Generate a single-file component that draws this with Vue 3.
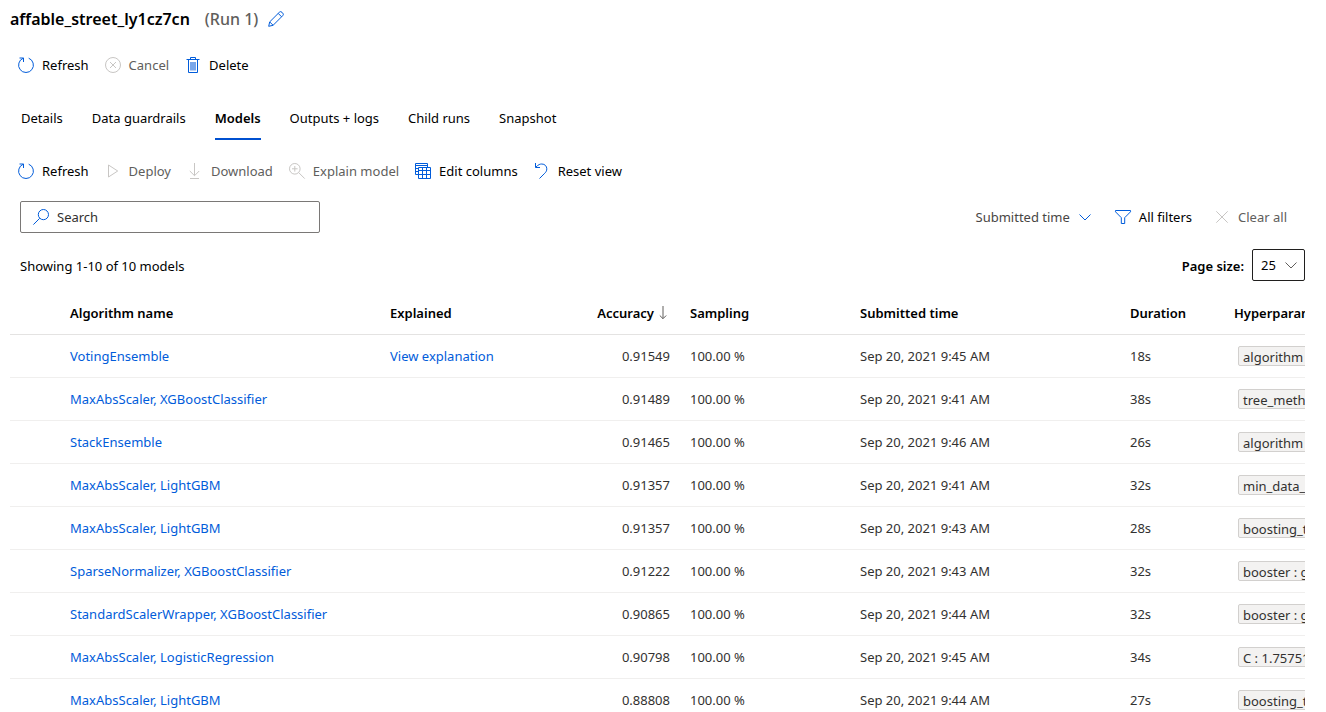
<script setup>
import { ref } from 'vue'

const tabs = ['Details', 'Data guardrails', 'Models', 'Outputs + logs', 'Child runs', 'Snapshot']
const activeTab = ref('Models')
const search = ref('')
const pageSize = ref('25')

const models = [
  { name: 'VotingEnsemble', explained: true, accuracy: '0.91549', time: 'Sep 20, 2021 9:45 AM', duration: '18s', param: 'algorithm : [ LightGBM ]' },
  { name: 'MaxAbsScaler, XGBoostClassifier', accuracy: '0.91489', time: 'Sep 20, 2021 9:41 AM', duration: '38s', param: 'tree_method : auto' },
  { name: 'StackEnsemble', accuracy: '0.91465', time: 'Sep 20, 2021 9:46 AM', duration: '26s', param: 'algorithm : [ LightGBM ]' },
  { name: 'MaxAbsScaler, LightGBM', accuracy: '0.91357', time: 'Sep 20, 2021 9:41 AM', duration: '32s', param: 'min_data_in_leaf : 20' },
  { name: 'MaxAbsScaler, LightGBM', accuracy: '0.91357', time: 'Sep 20, 2021 9:43 AM', duration: '28s', param: 'boosting_type : gbdt' },
  { name: 'SparseNormalizer, XGBoostClassifier', accuracy: '0.91222', time: 'Sep 20, 2021 9:43 AM', duration: '32s', param: 'booster : gbtree' },
  { name: 'StandardScalerWrapper, XGBoostClassifier', accuracy: '0.90865', time: 'Sep 20, 2021 9:44 AM', duration: '32s', param: 'booster : gbtree' },
  { name: 'MaxAbsScaler, LogisticRegression', accuracy: '0.90798', time: 'Sep 20, 2021 9:45 AM', duration: '34s', param: 'C : 1.757510624' },
  { name: 'MaxAbsScaler, LightGBM', accuracy: '0.88808', time: 'Sep 20, 2021 9:44 AM', duration: '27s', param: 'boosting_type : gbdt' }
]
</script>

<template>
  <main class="page">
    <header class="title">
      <h1>affable_street_ly1cz7cn</h1>
      <span class="run">(Run 1)</span>
      <button class="plain" aria-label="Edit name">
        <svg class="icon blue" viewBox="0 0 16 16"><path d="M.7 15.3l1-4.4L11.3 1.300a1.900 1.900 0 0 1 2.700 0l.7.700a1.900 1.900 0 0 1 0 2.700L5.100 14.300zM10.200 2.400l3.400 3.400M1.700 10.900l3.400 3.400" /></svg>
      </button>
    </header>

    <div class="bar">
      <button class="command">
        <svg class="icon blue" viewBox="0 0 16 16"><path d="M1.500 1h4v4M5.300 1.200A7.400 7.400 0 1 0 10.700 1.200" /></svg>Refresh
      </button>
      <button class="command" disabled>
        <svg class="icon" viewBox="0 0 16 16"><path d="M8 .5a7.500 7.500 0 1 0 0 15a7.500 7.500 0 1 0 0-15M5 5l6 6M11 5l-6 6" /></svg>Cancel
      </button>
      <button class="command">
        <svg class="icon blue" viewBox="0 0 16 16"><path d="M1.500 2.500h13M5.500 2.500v-2h5v2M3.500 2.500v13h9v-13" /><path class="tint" d="M5 5h6v8.500h-6z" /></svg>Delete
      </button>
    </div>

    <nav class="tabs" role="tablist">
      <button
        v-for="tab in tabs"
        :key="tab"
        role="tab"
        class="tab"
        :class="{ active: tab === activeTab }"
        :aria-selected="tab === activeTab"
        @click="activeTab = tab"
      >{{ tab }}</button>
    </nav>

    <div class="bar">
      <button class="command">
        <svg class="icon blue" viewBox="0 0 16 16"><path d="M1.500 1h4v4M5.300 1.200A7.400 7.400 0 1 0 10.700 1.200" /></svg>Refresh
      </button>
      <button class="command" disabled>
        <svg class="icon" viewBox="0 0 16 16"><path d="M3.500 2v12l9.200-6z" /></svg>Deploy
      </button>
      <button class="command" disabled>
        <svg class="icon" viewBox="0 0 16 16"><path d="M7.500 0v12.500M2.800 8l4.700 4.700L12.200 8M3 15.500h9" /></svg>Download
      </button>
      <button class="command" disabled>
        <svg class="icon" viewBox="0 0 16 16"><path d="M5.800 .5a5.300 5.300 0 1 0 0 10.600a5.300 5.300 0 1 0 0-10.600M9.700 9.600l6 6M3 5.800h5.600M5.800 3v5.600" /></svg>Explain model
      </button>
      <button class="command">
        <svg class="icon blue" viewBox="0 0 16 16"><path d="M3.500 15.500v-11h12v11zM3.500 7.500h12M3.500 11.500h12M7.500 4.500v11M11.500 4.500v11M12.500 4.500v-4h-12v11h3M.5 2.500h12M.5 5.500h3M.5 8.500h3" /></svg>Edit columns
      </button>
      <button class="command">
        <svg class="icon blue" viewBox="0 0 16 16"><path d="M1.500 0v4.500H6M1.800 4.200C4.500 1.500 6 1 7.800 1c3 0 5 2.200 5 4.800c0 2-.8 3.200-2 4.400L5.500 15.500" /></svg>Reset view
      </button>
    </div>

    <section class="filters">
      <label class="search">
        <svg class="icon blue" viewBox="0 0 16 16"><path d="M10.400 .5a5.100 5.100 0 1 0 0 10.200a5.100 5.100 0 1 0 0-10.200M6.700 9.300L.4 15.600" /></svg>
        <input v-model="search" type="text" placeholder="Search" aria-label="Search" />
      </label>
      <div class="filter-actions">
        <button class="plain sort">
          Submitted time
          <svg class="chevron blue" viewBox="0 0 12 12"><path d="M.5 3.500l5.500 5.500l5.500-5.500" /></svg>
        </button>
        <button class="plain all">
          <svg class="icon blue" viewBox="0 0 16 16"><path d="M.5 1.500h15v1.300L9.700 8.700v5.800h-3.400V8.700L.5 2.800z" /></svg>All filters
        </button>
        <button class="plain clear" disabled>
          <svg class="chevron" viewBox="0 0 12 12"><path d="M.3 .3l11.400 11.400M11.700 .3L.3 11.700" /></svg>Clear all
        </button>
      </div>
    </section>

    <section class="summary">
      <span class="caption">Showing 1-10 of 10 models</span>
      <div class="page-size">
        <label class="caption" for="page-size">Page size:</label>
        <span class="select">
          <select id="page-size" v-model="pageSize">
            <option>25</option>
            <option>50</option>
          </select>
          <svg class="chevron" viewBox="0 0 12 12"><path d="M.5 3.500l5.500 5.500l5.500-5.500" /></svg>
        </span>
      </div>
    </section>

    <div class="grid">
      <table>
        <colgroup>
          <col class="c-select" /><col class="c-name" /><col class="c-explained" /><col class="c-accuracy" />
          <col class="c-sampling" /><col class="c-time" /><col class="c-duration" /><col class="c-params" />
        </colgroup>
        <thead>
          <tr>
            <td></td>
            <th scope="col">Algorithm name</th>
            <th scope="col">Explained</th>
            <th scope="col" class="number">
              <span class="sorted">Accuracy
                <svg class="arrow" viewBox="0 0 8 14"><path d="M4 0v12.500M.8 9.500l3.200 3.200l3.200-3.200" /></svg>
              </span>
            </th>
            <th scope="col">Sampling</th>
            <th scope="col">Submitted time</th>
            <th scope="col">Duration</th>
            <th scope="col">Hyperparameters</th>
          </tr>
        </thead>
        <tbody>
          <tr v-for="(model, i) in models" :key="i">
            <td></td>
            <td><a href="#">{{ model.name }}</a></td>
            <td><a v-if="model.explained" href="#">View explanation</a></td>
            <td class="number">{{ model.accuracy }}</td>
            <td>100.00 %</td>
            <td>{{ model.time }}</td>
            <td>{{ model.duration }}</td>
            <td><span class="tag">{{ model.param }}</span></td>
          </tr>
        </tbody>
      </table>
    </div>
  </main>
</template>

<style>
body {
  margin: 0;
  background: #fff;
}
</style>

<style scoped>
.page {
  box-sizing: border-box;
  height: 100vh;
  overflow: hidden;
  padding: 6px 21px 0 10px;
  color: #000;
  font-family: "Noto Sans", "Open Sans", sans-serif;
  font-size: 13px;
  line-height: 20px;
}
button,
input,
select {
  margin: 0;
  padding: 0;
  border: 0;
  background: none;
  color: inherit;
  font: inherit;
}
svg {
  flex: none;
  fill: none;
  stroke: #c8c6c4;
  overflow: visible;
}
.icon {
  width: 16px;
  height: 16px;
}
.chevron {
  width: 12px;
  height: 12px;
}
svg.blue {
  stroke: #015cda;
}
.tint {
  fill: #7aa7ea;
  stroke: none;
}
.title {
  display: flex;
  align-items: center;
  height: 26px;
  font-size: 16px;
}
h1 {
  margin: 0 15px 0 0;
  font-size: 16px;
  font-weight: 600;
}
.run {
  margin-right: 10px;
  color: #605e5c;
  font-weight: 500;
}
.plain {
  display: flex;
  align-items: center;
}
.bar {
  display: flex;
  align-items: center;
  gap: 16px;
  padding-left: 8px;
  height: 32px;
}
.title + .bar {
  margin-top: 17px;
}
.command {
  display: flex;
  align-items: center;
  gap: 8px;
}
button:disabled {
  color: #605e5c;
}
.tabs {
  display: flex;
  gap: 29px;
  margin: 15px 0 15px 11px;
}
.tab {
  height: 44px;
  padding-top: 2px;
  border-bottom: 2px solid transparent;
}
.tab.active {
  border-bottom-color: #0050d0;
  font-weight: 600;
}
.filters {
  display: flex;
  justify-content: space-between;
  align-items: center;
  margin: 14px 0 0 10px;
}
.search {
  display: flex;
  align-items: center;
  gap: 8px;
  box-sizing: border-box;
  width: 300px;
  height: 32px;
  padding: 0 12px;
  border: 1px solid #7a7876;
  border-radius: 2px;
}
.search input {
  flex: 1;
  min-width: 0;
  outline: 0;
}
.search input::placeholder {
  color: #323130;
  opacity: 1;
}
.filter-actions {
  display: flex;
  align-items: center;
  gap: 24px;
  padding-right: 18px;
}
.sort {
  gap: 9px;
  color: #484644;
}
.all {
  gap: 8px;
}
.clear {
  gap: 10px;
}
.summary {
  display: flex;
  justify-content: space-between;
  align-items: center;
  margin: 16px 0 0 10px;
}
.caption {
  padding-top: 2px;
}
.page-size {
  display: flex;
  align-items: center;
  gap: 8px;
  font-weight: 600;
}
.select {
  display: grid;
  align-items: center;
  width: 53px;
  height: 32px;
  box-sizing: border-box;
  border: 1px solid #201f1e;
  border-radius: 2px;
  font-weight: 400;
}
.select select,
.select svg {
  grid-area: 1 / 1;
}
.select select {
  appearance: none;
  width: 100%;
  height: 30px;
  padding-left: 8px;
}
.select svg {
  justify-self: end;
  margin-right: 7px;
  stroke: #605e5c;
  pointer-events: none;
}
.grid {
  margin-top: 11px;
  overflow: hidden;
}
table {
  width: 100%;
  min-width: 1500px;
  table-layout: fixed;
  border-collapse: separate;
  border-spacing: 0;
  color: #323130;
}
.c-select { width: 50px; }
.c-name { width: 320px; }
.c-explained { width: 180px; }
.c-accuracy { width: 120px; }
.c-sampling { width: 170px; }
.c-time { width: 270px; }
.c-duration { width: 104px; }
th,
td {
  box-sizing: border-box;
  height: 43px;
  padding: 0 10px;
  border-bottom: 1px solid #f0efee;
  text-align: left;
  white-space: nowrap;
}
thead th,
thead td {
  border-bottom-color: #e4e3e2;
}
th {
  color: #000;
  font-weight: 600;
}
.number {
  text-align: right;
}
.sorted {
  display: inline-flex;
  align-items: center;
  gap: 5px;
}
.arrow {
  width: 8px;
  height: 14px;
  margin-right: 3px;
  stroke: #605e5c;
}
a {
  color: #015cda;
  text-decoration: none;
}
.tag {
  display: block;
  box-sizing: border-box;
  height: 20px;
  margin-left: 4px;
  padding: 0 4px;
  border: 1px solid #d2d0ce;
  border-radius: 2px;
  background: #f3f2f1;
}
</style>
